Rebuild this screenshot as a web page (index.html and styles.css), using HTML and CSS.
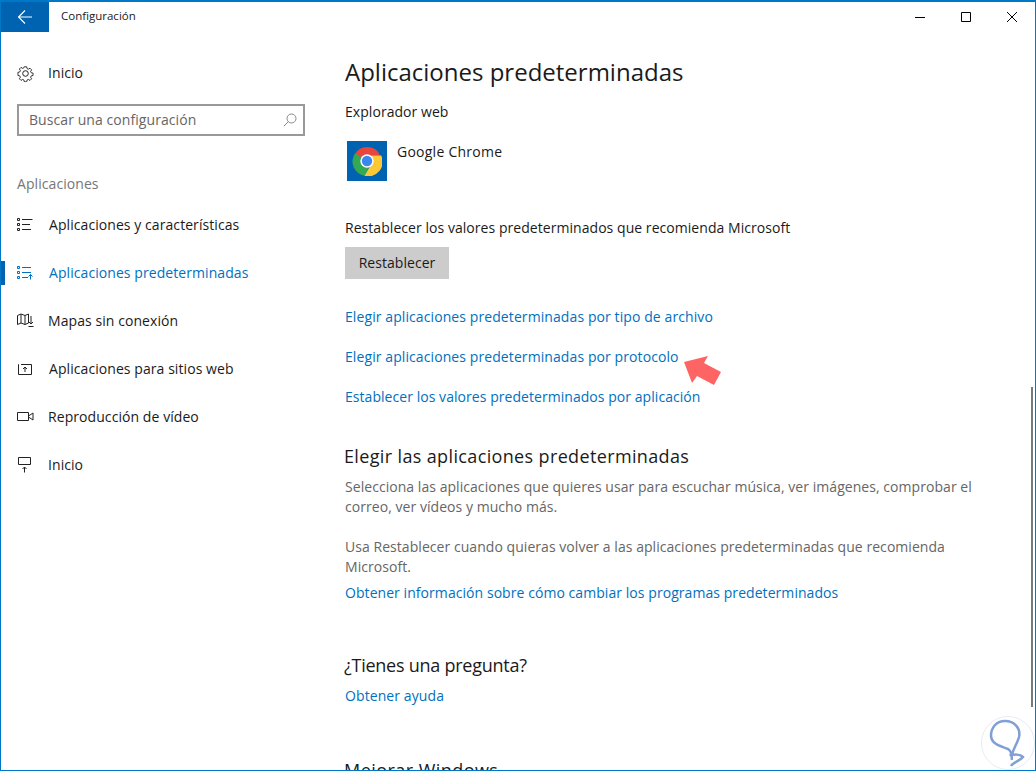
FILE: index.html
```html
<!DOCTYPE html>
<html lang="es">
<head>
    <meta charset="UTF-8">
    <meta name="viewport" content="width=device-width, initial-scale=1.0">
    <title>Configuración</title>
    <link rel="stylesheet" href="styles.css">
</head>
<body>
    <div class="window">
        <div class="titlebar">
            <div class="back-btn">
                <svg width="16" height="16" viewBox="0 0 16 16" fill="none" stroke="#fff" stroke-width="1.1"><path d="M1.5 8H15M8 1.5 1.5 8 8 14.5"/></svg>
            </div>
            <span class="title">Configuración</span>
            <div class="controls">
                <span class="control"><svg width="12" height="12" viewBox="0 0 12 12" stroke="#000" fill="none"><path d="M1 6.5h10"/></svg></span>
                <span class="control"><svg width="12" height="12" viewBox="0 0 12 12" stroke="#000" fill="none"><path d="M1.5 1.5h9v9h-9z"/></svg></span>
                <span class="control"><svg width="12" height="12" viewBox="0 0 12 12" stroke="#000" fill="none"><path d="M1 1l10 10M11 1 1 11"/></svg></span>
            </div>
        </div>

        <div class="content">
            <div class="sidebar">
                <div class="nav-item home">
                    <span class="nav-icon">
                        <svg width="17" height="17" viewBox="0 0 17 17" fill="none" stroke="#222"><circle cx="8.5" cy="8.5" r="2.8"/><path d="M7.2 1h2.6l.4 2 1.5.7 1.8-1.1 1.8 1.8-1.1 1.8.7 1.5 2 .4v2.6l-2 .4-.7 1.5 1.1 1.8-1.8 1.8-1.8-1.1-1.5.7-.4 2H7.2l-.4-2-1.5-.7-1.8 1.1-1.8-1.8 1.1-1.8-.7-1.5-2-.4V7.2l2-.4.7-1.5-1.1-1.8 1.8-1.8 1.8 1.1 1.5-.7z" transform="translate(.85 .85) scale(.9)"/></svg>
                    </span>
                    <span>Inicio</span>
                </div>
                <div class="search">
                    <span>Buscar una configuración</span>
                    <svg width="14" height="14" viewBox="0 0 14 14" fill="none" stroke="#888"><circle cx="8.5" cy="5.5" r="4.5"/><path d="M5.2 8.8.8 13.2"/></svg>
                </div>
                <div class="group-label">Aplicaciones</div>

                <div class="nav-item">
                    <span class="nav-icon">
                        <svg width="16" height="16" viewBox="0 0 16 16" fill="none" stroke="#222"><path d="M.5 1.5h2v2h-2zM.5 6.5h2v2h-2zM.5 11.5h2v2h-2zM5 2.5h10.500M5 7.500h8M5 12.500h9"/></svg>
                    </span>
                    <span class="wide">Aplicaciones y características</span>
                </div>
                <div class="nav-item active">
                    <span class="nav-icon">
                        <svg width="16" height="16" viewBox="0 0 16 16" fill="none" stroke="#0070c0"><path d="M.5 1.500h2v2h-2zM.5 6.500h2v2h-2zM.5 11.500h2v2h-2zM5 2.500h9M5 7.500h9M5 12.500h6M13.500 14.500V9.500M11.500 11.500l2-2 2 2"/></svg>
                    </span>
                    <span class="wide">Aplicaciones predeterminadas</span>
                </div>
                <div class="nav-item">
                    <span class="nav-icon">
                        <svg width="17" height="16" viewBox="0 0 17 16" fill="none" stroke="#222"><path d="M.5 2.500 4 1l4 1.500L11.500 1v9L8 11.500 4 10 .5 11.500zM4 1v9M8 2.500v9M14 3v8M12 9l2 2 2-2M11.500 13.500h5"/></svg>
                    </span>
                    <span>Mapas sin conexión</span>
                </div>
                <div class="nav-item">
                    <span class="nav-icon">
                        <svg width="16" height="16" viewBox="0 0 16 16" fill="none" stroke="#222"><path d="M4 3.500h10.500v10H1.500v-10H2M8 11V6M6 8l2-2 2 2"/></svg>
                    </span>
                    <span class="wide">Aplicaciones para sitios web</span>
                </div>
                <div class="nav-item">
                    <span class="nav-icon">
                        <svg width="17" height="16" viewBox="0 0 17 16" fill="none" stroke="#222"><path d="M.5 3.500h11v8H.5zM11.500 7l4.500-3v7l-4.500-3"/></svg>
                    </span>
                    <span>Reproducción de vídeo</span>
                </div>
                <div class="nav-item">
                    <span class="nav-icon">
                        <svg width="16" height="16" viewBox="0 0 16 16" fill="none" stroke="#222"><path d="M1.500 .5h12v7h-12zM7.500 15.500V10M5.500 12l2-2 2 2"/></svg>
                    </span>
                    <span>Inicio</span>
                </div>
            </div>

            <div class="main">
                <h1>Aplicaciones predeterminadas</h1>
                <p class="browser-label">Explorador web</p>
                <div class="app-row">
                    <div class="app-icon">
                        <svg width="30" height="30" viewBox="0 0 30 30">
                            <path d="M15 15 3.100 8A14 14 0 0 1 28 9.500H15z" fill="#e8453c"/>
                            <path d="M15 15 3.100 7.200A14.500 14.500 0 0 0 12.500 29.800L19 18z" fill="#34a853"/>
                            <path d="M14.500 9.500H29.200A14.500 14.500 0 0 1 12.500 29.800L20 17z" fill="#fcc934"/>
                            <circle cx="15" cy="15" r="6.700" fill="#fff"/>
                            <circle cx="15" cy="15" r="5.200" fill="#3b87f0"/>
                        </svg>
                    </div>
                    <span class="app-name">Google Chrome</span>
                </div>
                <p class="reset-label">Restablecer los valores predeterminados que recomienda Microsoft</p>
                <div class="reset-btn">Restablecer</div>
                <div class="links">
                    <a>Elegir aplicaciones predeterminadas por tipo de archivo</a>
                    <a>Elegir aplicaciones predeterminadas por protocolo</a>
                    <a class="link-tight">Establecer los valores predeterminados por aplicación</a>
                </div>
                <h2 class="section-first">Elegir las aplicaciones predeterminadas</h2>
                <p class="gray">Selecciona las aplicaciones que quieres usar para escuchar música, ver imágenes, comprobar el correo, ver vídeos y mucho más.</p>
                <p class="gray second">Usa Restablecer cuando quieras volver a las aplicaciones predeterminadas que recomienda Microsoft.</p>
                <a class="info-link">Obtener información sobre cómo cambiar los programas predeterminados</a>
                <h2 class="section-question">¿Tienes una pregunta?</h2>
                <a class="help-link">Obtener ayuda</a>
                <h2 class="section-last">Mejorar Windows</h2>
            </div>
        </div>

        <svg class="arrow" width="42" height="34" viewBox="0 0 42 34"><path d="M3 7 27 1 23 8 40 17 33 30 16 21 11 28z" fill="#ff6464"/></svg>
        <div class="scrollbar"></div>
        <svg class="watermark" width="54" height="54" viewBox="0 0 54 54" fill="none">
            <circle cx="27" cy="27" r="26.500" fill="#fff" stroke="#e6ecf5"/>
            <path d="M31 44C29 37 36 29 38 21 40 12 33 5 24 5 15 5 10 12 10 20 11 29 20 30 27 33 30 35 31 38 29 40 33 38 39 38 42 41 39 45 32 46 30 50" stroke="#7f9fd6" stroke-width="2.500"/>
        </svg>
    </div>
</body>
</html>
```

FILE: styles.css
```css
* {
    margin: 0;
    padding: 0;
    box-sizing: border-box;
}
body {
    font-family: "Open Sans", "Noto Sans", Arial, sans-serif;
    font-size: 14px;
    line-height: 20px;
    color: #1a1a1a;
    background-color: white;
}
.window {
    position: relative;
    height: 771px;
    border: 1px solid #0078c8;
    border-top-width: 2px;
    overflow: hidden;
}
.titlebar {
    display: flex;
    align-items: center;
    height: 30px;
}
.back-btn {
    display: flex;
    align-items: center;
    justify-content: center;
    width: 48px;
    height: 30px;
    background-color: #0063b1;
}
.title {
    margin-left: 12px;
    margin-bottom: 2px;
    font-size: 11.500px;
}
.controls {
    display: flex;
    margin-left: auto;
}
.control {
    display: flex;
    align-items: center;
    justify-content: center;
    width: 46px;
    height: 30px;
    padding-bottom: 1px;
}
.content {
    display: flex;
}
.sidebar {
    width: 344px;
    flex-shrink: 0;
    letter-spacing: 0.07px;
}
.nav-item {
    display: flex;
    align-items: center;
    height: 48px;
    padding-left: 16px;
    position: relative;
}
.nav-item.home {
    margin-top: 17px;
}
.nav-icon {
    display: flex;
    width: 31px;
}
.wide {
    margin-left: 1px;
}
.nav-item.active {
    color: #0070c0;
}
.nav-item.active::before {
    content: "";
    position: absolute;
    left: 0;
    top: 12px;
    width: 4px;
    height: 24px;
    background-color: #0063b1;
}
.search {
    display: flex;
    align-items: center;
    justify-content: space-between;
    width: 288px;
    height: 32px;
    margin: 7px 0 0 16px;
    padding: 0 6px 0 10px;
    border: 2px solid #999;
    color: #666;
}
.group-label {
    margin-top: 38px;
    margin-bottom: 7px;
    padding-left: 16px;
    color: #767676;
}
.main {
    flex: 1;
    padding-right: 40px;
    letter-spacing: 0.05px;
}
h1 {
    font-size: 24px;
    font-weight: 400;
    line-height: 32px;
    margin-top: 24px;
    letter-spacing: 0;
}
.browser-label {
    margin-top: 14px;
}
.app-row {
    display: flex;
    margin-top: 19px;
    margin-left: 2px;
}
.app-icon {
    display: flex;
    align-items: center;
    justify-content: center;
    width: 40px;
    height: 40px;
    background-color: #0063b1;
}
.app-name {
    margin-left: 10px;
    margin-top: 1px;
    letter-spacing: 0.25px;
}
.reset-label {
    margin-top: 37px;
}
.reset-btn {
    display: flex;
    align-items: center;
    justify-content: center;
    width: 104px;
    height: 32px;
    margin-top: 9px;
    background-color: #ccc;
}
.links {
    display: flex;
    flex-direction: column;
    gap: 20px;
    margin-top: 28px;
}
a {
    display: block;
    color: #0070c0;
    letter-spacing: 0.09px;
}
.links .link-tight {
    letter-spacing: 0.05px;
}
h2 {
    font-size: 18px;
    font-weight: 400;
    line-height: 24px;
}
.section-first {
    margin-top: 37px;
    margin-left: -1px;
    letter-spacing: 0.36px;
}
.gray {
    color: #666;
    margin-top: 9px;
}
.gray.second {
    margin-top: 20px;
}
.info-link {
    margin-top: 6px;
    letter-spacing: 0.06px;
}
.section-question {
    margin-top: 50px;
    margin-left: -1px;
    letter-spacing: -0.25px;
}
.help-link {
    margin-top: 9px;
}
.section-last {
    margin-top: 52px;
    margin-left: -1px;
    letter-spacing: 0.45px;
}
.arrow {
    position: absolute;
    left: 680px;
    top: 353px;
}
.scrollbar {
    position: absolute;
    right: 2px;
    top: 385px;
    width: 2px;
    height: 320px;
    background-color: #7a7a7a;
}
.watermark {
    position: absolute;
    right: 0;
    bottom: 0;
}
```
